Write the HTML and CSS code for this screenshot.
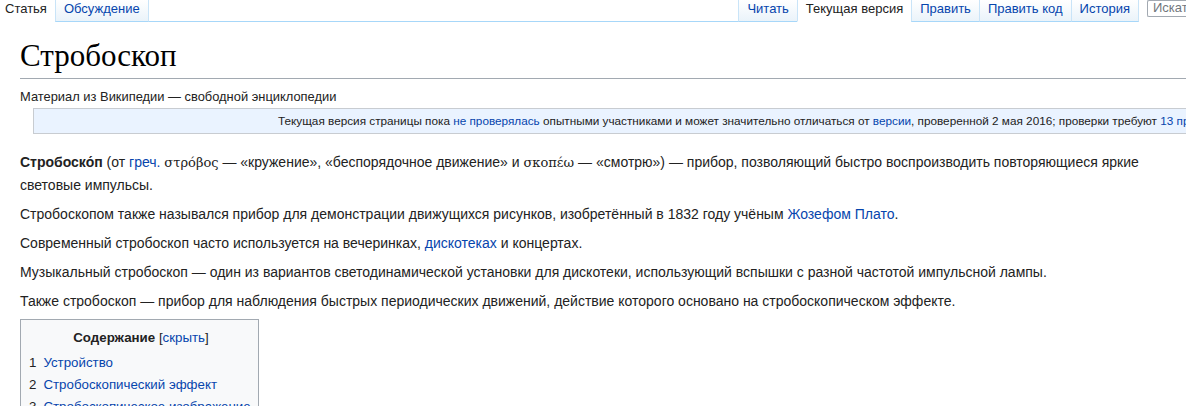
FILE: index.html
```html
<!DOCTYPE html>
<html lang="ru">
<head>
<meta charset="utf-8">
<title>Стробоскоп</title>
<link rel="stylesheet" href="styles.css">
</head>
<body>
<div class="head">
  <div class="tabs">
    <a class="tab tab-first selected">Статья</a>
    <a class="tab">Обсуждение</a>
  </div>
  <div class="head-gap"></div>
  <div class="tabs tabs-right">
    <a class="tab">Читать</a>
    <a class="tab selected">Текущая версия</a>
    <a class="tab">Править</a>
    <a class="tab">Править код</a>
    <a class="tab">История</a>
  </div>
  <div class="search"><span class="search-ph">Искать</span></div>
</div>
<div class="content">
  <h1 class="first-heading">Стробоскоп</h1>
  <div class="site-sub">Материал из Википедии — свободной энциклопедии</div>
  <div class="flagged">Текущая версия страницы пока <a href="#">не проверялась</a> опытными участниками и может значительно отличаться от <a href="#">версии</a>, проверенной 2 мая 2016; проверки требуют <a href="#">13 правок</a>.</div>
  <div class="body-text">
    <p><b>Стробоско́п</b> (от <a href="#">греч.</a> <span class="greek">στρόβος</span> — «кружение», «беспорядочное движение» и <span class="greek">σκοπέω</span> — «смотрю») — прибор, позволяющий быстро воспроизводить повторяющиеся яркие световые импульсы.</p>
    <p>Стробоскопом также назывался прибор для демонстрации движущихся рисунков, изобретённый в 1832 году учёным <a href="#">Жозефом Плато</a>.</p>
    <p>Современный стробоскоп часто используется на вечеринках, <a href="#">дискотеках</a> и концертах.</p>
    <p>Музыкальный стробоскоп — один из вариантов светодинамической установки для дискотеки, использующий вспышки с разной частотой импульсной лампы.</p>
    <p>Также стробоскоп — прибор для наблюдения быстрых периодических движений, действие которого основано на стробоскопическом эффекте.</p>
    <div class="toc">
      <div class="toc-title"><b>Содержание</b> <span class="toc-toggle">[<a href="#">скрыть</a>]</span></div>
      <ul class="toc-list">
        <li><span class="toc-num">1</span><a href="#">Устройство</a></li>
        <li><span class="toc-num">2</span><a href="#">Стробоскопический эффект</a></li>
        <li><span class="toc-num">3</span><a href="#">Стробоскопическое изображение</a></li>
      </ul>
    </div>
  </div>
</div>
</body>
</html>
```
FILE: styles.css
```css
html, body {
  margin: 0;
  padding: 0;
  background: #fff;
  overflow: hidden;
  height: 406px;
}
body {
  font-family: "Liberation Sans", Arial, sans-serif;
  color: #222;
}
a {
  color: #0645ad;
  text-decoration: none;
}

/* ---------- tab bar ---------- */
.head {
  display: flex;
  align-items: stretch;
  height: 22px;
}
.tabs {
  display: flex;
}
.tab {
  display: block;
  height: 22px;
  box-sizing: border-box;
  padding: 1px 8px 0 8px;
  font-size: 13px;
  line-height: 16px;
  color: #0645ad;
  background: linear-gradient(to bottom, #ffffff 0%, #eaf3fa 100%);
  border-bottom: 1px solid #a7d7f9;
  border-left: 1px solid #c9e4f8;
}
.tab.selected {
  background: #fff;
  color: #222;
  border-bottom-color: #fff;
}
.tab-first {
  border-left: none;
  padding-left: 5px;
}
.tabs-right .tab:last-child {
  border-right: 1px solid #c9e4f8;
}
.head-gap {
  flex: 1;
  border-bottom: 1px solid #a7d7f9;
  border-left: 1px solid #c9e4f8;
}
.search {
  flex: 0 0 39px;
  margin-left: 8px;
  height: 17px;
  box-sizing: border-box;
  border: 1px solid #a2a9b1;
  border-right: none;
  border-radius: 2px 0 0 2px;
  padding: 0 0 0 5px;
  font-size: 13px;
  line-height: 14px;
  color: #72777d;
  white-space: nowrap;
  overflow: hidden;
  align-self: flex-start;
}

/* ---------- content ---------- */
.content {
  padding: 14px 16px 0 20px;
}
.first-heading {
  margin: 0 -16px 0 0;
  font-family: "Liberation Serif", "Times New Roman", serif;
  font-weight: normal;
  font-size: 31px;
  line-height: 40px;
  color: #000;
  border-bottom: 1px solid #a2a9b1;
  padding-bottom: 2px;
}
.site-sub {
  margin-top: 10px;
  font-size: 12.9px;
  line-height: 16px;
  color: #222;
}
.flagged {
  margin: 3px -16px 0 13px;
  height: 26px;
  box-sizing: border-box;
  background: #eaf3ff;
  border: 1px solid #c8ccd1;
  border-right: none;
  padding-left: 244px;
  font-size: 11.75px;
  line-height: 24px;
  white-space: nowrap;
  overflow: hidden;
}
.body-text {
  margin-top: 17px;
  font-size: 14px;
  line-height: 22.4px;
}
.body-text p {
  margin: 0 0 6.6px 0;
}
.greek {
  font-family: "DejaVu Serif", "Liberation Serif", serif;
  font-size: 13px;
}

/* ---------- toc ---------- */
.toc {
  display: block;
  width: 220px;
  margin-top: 0;
  border: 1px solid #a2a9b1;
  background: #f8f9fa;
  padding: 6px 9px 7px 8px;
  font-size: 13.3px;
  line-height: 22px;
}
.toc-title {
  text-align: center;
  padding-top: 1px;
  padding-left: 4px;
  margin-bottom: 3px;
}
.toc-toggle {
  font-weight: normal;
}
.toc-list {
  list-style: none;
  margin: 0;
  padding: 0;
}
.toc-list li {
  white-space: nowrap;
}
.toc-num {
  color: #222;
  display: inline-block;
  margin-right: 7px;
}
```
